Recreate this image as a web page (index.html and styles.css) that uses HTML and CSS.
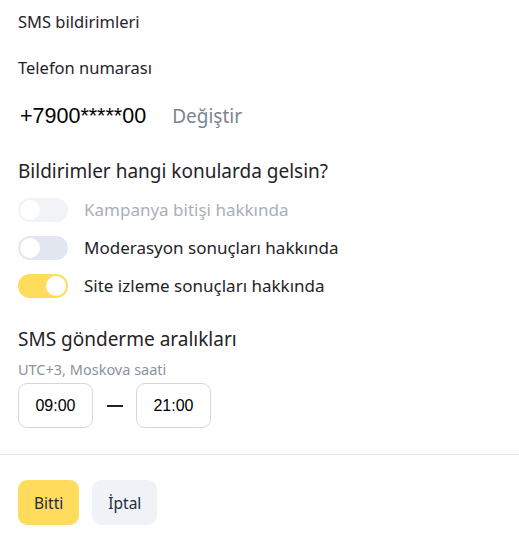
FILE: index.html
```html
<!DOCTYPE html>
<html lang="tr">
<head>
  <meta charset="UTF-8" />
  <meta name="viewport" content="width=device-width, initial-scale=1.0">
  <title>SMS bildirimleri</title>
  <link rel="stylesheet" href="styles.css">
</head>
<body>

<div class="panel">
  <div class="title">SMS bildirimleri</div>
  <div class="label">Telefon numarası</div>
  <div class="phone">
    <span class="number">+7900*****00</span>
    <span class="change">Değiştir</span>
  </div>

  <div class="heading">Bildirimler hangi konularda gelsin?</div>
  <div class="toggles">
    <div class="row disabled">
      <span class="switch"><span class="knob"></span></span>
      <span>Kampanya bitişi hakkında</span>
    </div>
    <div class="row">
      <span class="switch"><span class="knob"></span></span>
      <span>Moderasyon sonuçları hakkında</span>
    </div>
    <div class="row on">
      <span class="switch"><span class="knob"></span></span>
      <span>Site izleme sonuçları hakkında</span>
    </div>
  </div>

  <div class="heading interval">SMS gönderme aralıkları</div>
  <div class="hint">UTC+3, Moskova saati</div>
  <div class="times">
    <div class="time">09:00</div>
    <div class="dash"></div>
    <div class="time">21:00</div>
  </div>
</div>

<div class="footer">
  <button class="btn primary">Bitti</button>
  <button class="btn">İptal</button>
</div>

</body>
</html>
```

FILE: styles.css
```css
body {
  margin: 0;
  font-family: 'Noto Sans', 'Open Sans', sans-serif;
  color: #1f2328;
  background: #fff;
}
.panel {
  padding: 11px 18px 26px;
}
.title {
  font-size: 16.5px;
  line-height: 22px;
}
.label {
  font-size: 16.5px;
  line-height: 22px;
  margin-top: 24px;
}
.phone {
  display: flex;
  gap: 26px;
  margin-top: 25px;
  font-size: 19px;
  line-height: 24px;
}
.number {
  font-family: 'Liberation Sans', Arial, sans-serif;
  font-size: 21.5px;
  padding-left: 2px;
  color: #000;
}
.change {
  color: #7b8591;
}
.heading {
  font-size: 19px;
  line-height: 26px;
  margin-top: 30px;
}
.toggles {
  display: flex;
  flex-direction: column;
  gap: 14px;
  margin-top: 14px;
}
.row {
  display: flex;
  align-items: center;
  gap: 16px;
  font-size: 17px;
  line-height: 24px;
}
.switch {
  width: 50px;
  height: 24px;
  border-radius: 12px;
  background: #e2e6ee;
  display: flex;
  align-items: center;
  padding: 0 2px;
  box-sizing: border-box;
}
.knob {
  width: 20px;
  height: 20px;
  border-radius: 50%;
  background: #fff;
}
.row.disabled {
  color: #a9afb9;
}
.row.disabled .switch {
  background: #f1f3f7;
}
.row.on .switch {
  background: #ffdc5c;
  justify-content: flex-end;
}
.interval {
  margin-top: 28px;
}
.hint {
  font-size: 14.5px;
  line-height: 18px;
  color: #8a929d;
  margin-top: 8px;
}
.times {
  display: flex;
  align-items: center;
  margin-top: 5px;
}
.time {
  width: 75px;
  height: 45px;
  box-sizing: border-box;
  border: 1px solid #d3d7e0;
  border-radius: 9px;
  display: flex;
  align-items: center;
  justify-content: center;
  font-family: 'Liberation Sans', Arial, sans-serif;
  font-size: 16px;
  color: #000;
}
.dash {
  width: 16px;
  height: 2px;
  background: #1f2328;
  margin: 0 13px 0 14px;
}
.footer {
  border-top: 1px solid #e6e6e6;
  padding: 25px 18px;
  display: flex;
  gap: 13px;
}
.btn {
  font-family: 'Noto Sans', 'Open Sans', sans-serif;
  font-size: 15.5px;
  color: #1f2d3d;
  height: 45px;
  padding: 0 16px;
  border: none;
  border-radius: 9px;
  background: #eff2f7;
}
.btn.primary {
  background: #ffdc5c;
}
```
